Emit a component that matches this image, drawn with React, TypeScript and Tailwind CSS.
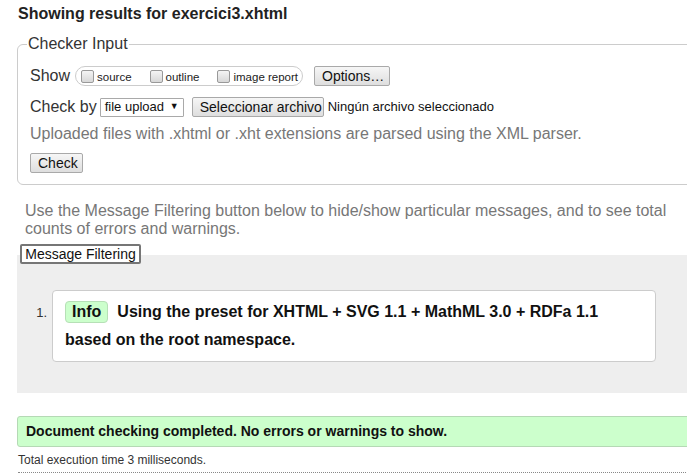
const font = "font-['Liberation_Sans',Arial,sans-serif]";

function Box({ label }: { label: string }) {
  return (
    <label className="flex shrink-0 items-center gap-[3px] whitespace-nowrap text-[11.5px] text-[#222]">
      <span className="inline-block w-[13px] h-[13px] rounded-[2px] border border-[#999] bg-gradient-to-b from-[#f4f4f4] to-[#d8d8d8]" />
      <span className="mt-[3px]">{label}</span>
    </label>
  );
}

function GrayButton({ children, className = "" }: { children: React.ReactNode; className?: string }) {
  return (
    <button
      className={`h-[20px] px-[7px] whitespace-nowrap text-[14px] leading-none text-[#111] border border-[#a9a9a9] rounded-[2px] bg-gradient-to-b from-[#f6f6f6] to-[#dedede] ${className}`}
    >
      {children}
    </button>
  );
}

export default function App() {
  return (
    <div className={`w-[687px] h-[475px] overflow-hidden bg-white ${font}`}>
      <div className="w-[760px]">
        <h2 className="pl-[18px] pt-[4px] text-[16px] font-bold text-[#222] leading-[20px]">
          Showing results for exercici3.xhtml
        </h2>

        {/* checker input */}
        <fieldset className="ml-[17px] mt-[11px] border border-[#ccc] rounded-[6px] pl-[12px] pb-[9px] pt-[13px]">
          <legend className="ml-[-3px] px-[1px] text-[16px] leading-[18px] text-[#333]">Checker Input</legend>
          <div className="flex items-center h-[20px]">
            <span className="text-[16px] text-[#333] mr-[5px]">Show</span>
            <div className="flex items-center gap-[18px] h-[20px] border border-[#ccc] rounded-[10px] pl-[5px] pr-[4px]">
              <Box label="source" />
              <Box label="outline" />
              <Box label="image report" />
            </div>
            <GrayButton className="ml-[11px] w-[76px]">Options…</GrayButton>
          </div>
          <div className="flex items-center h-[20px] mt-[11px]">
            <span className="text-[16px] text-[#333] mr-[3px]">Check by</span>
            <div className="flex items-center justify-between w-[84px] h-[19px] border border-[#a9a9a9] rounded-[1px] px-[4px] text-[13px] text-[#111]">
              <span>file upload</span>
              <span className="text-[9px]">▼</span>
            </div>
            <GrayButton className="ml-[8px] w-[132px]">Seleccionar archivo</GrayButton>
            <span className="ml-[4px] text-[13px] text-[#111]">Ningún archivo seleccionado</span>
          </div>
          <p className="mt-[8px] text-[16px] leading-[18px] text-[#777]">
            Uploaded files with .xhtml or .xht extensions are parsed using the XML parser.
          </p>
          <GrayButton className="mt-[10px] w-[53px]">Check</GrayButton>
        </fieldset>

        <p className="mt-[17px] ml-[25px] w-[650px] text-[16px] leading-[18px] text-[#777]">
          Use the Message Filtering button below to hide/show particular messages, and to see total counts of errors and warnings.
        </p>

        {/* messages */}
        <div className="relative mt-[6px] ml-[17px] pt-[11px]">
          <button className="absolute left-[3px] top-[0px] h-[20px] w-[121px] border-2 border-[#767676] rounded-[2px] bg-white text-[14px] leading-none text-[#111]">
            Message Filtering
          </button>
          <div className="h-[138px] bg-[#eeeeee] pt-[35px]">
            <div className="flex items-start">
              <span className="w-[33px] pt-[13px] text-right pr-[3px] text-[13px] text-[#333]">1.</span>
              <div className="ml-[2px] w-[604px] h-[72px] bg-white border border-[#ccc] rounded-[4px] px-[12px] pt-[7px]">
                <div className="flex items-center text-[16px] font-bold text-[#111] leading-[28px]">
                  <span className="inline-flex items-center h-[22px] px-[6px] mr-[9px] rounded-[4px] border border-[#b6e0b6] bg-[#ccffcc] text-[#111]">
                    Info
                  </span>
                  Using the preset for XHTML + SVG 1.1 + MathML 3.0 + RDFa 1.1
                </div>
                <div className="text-[16px] font-bold text-[#111] leading-[28px]">based on the root namespace.</div>
              </div>
            </div>
          </div>
        </div>

        <div className="mt-[23px] ml-[17px] h-[31px] flex items-center pl-[8px] bg-[#ccffcc] border border-[#b5d9b5] rounded-[3px] text-[14px] font-bold text-[#111]">
          Document checking completed. No errors or warnings to show.
        </div>
        <p className="ml-[18px] mt-[6px] text-[12px] leading-[14px] text-[#333]">Total execution time 3 milliseconds.</p>
        <div className="ml-[18px] mt-[5px] border-t border-dotted border-[#888]" />
      </div>
    </div>
  );
}
